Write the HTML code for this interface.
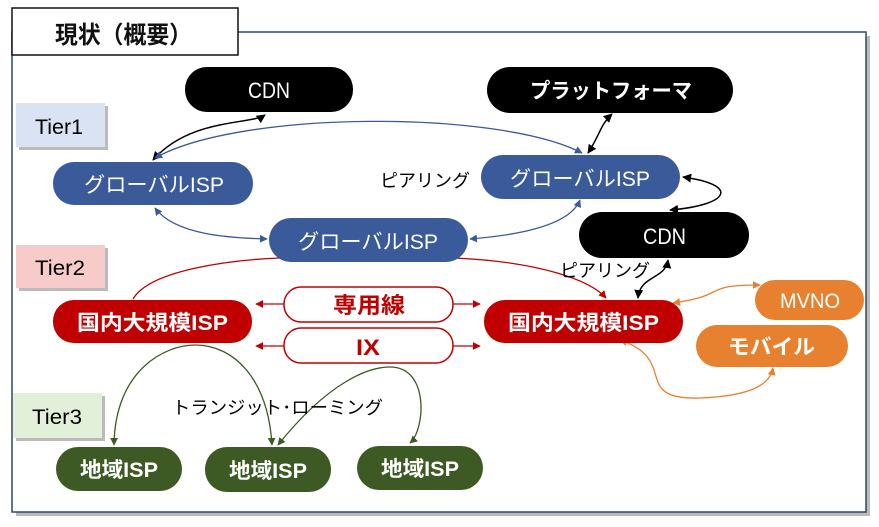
<!DOCTYPE html>
<html><head><meta charset="utf-8"><style>
body{margin:0;background:#fff;width:879px;height:522px;overflow:hidden}
svg text{font-family:"Liberation Sans","Noto Sans CJK JP",sans-serif}
</style></head><body>
<svg width="879" height="522" viewBox="0 0 879 522" xmlns="http://www.w3.org/2000/svg">
<defs>
<marker id="ab" viewBox="0 0 10 10" refX="9" refY="5" markerWidth="6" markerHeight="6" orient="auto-start-reverse"><path d="M0,0L10,5L0,10z" fill="#000"/></marker>
<marker id="au" viewBox="0 0 10 10" refX="9" refY="5" markerWidth="6" markerHeight="6" orient="auto-start-reverse"><path d="M0,0L10,5L0,10z" fill="#3a5a9a"/></marker>
<marker id="ar" viewBox="0 0 10 10" refX="9" refY="5" markerWidth="6" markerHeight="6" orient="auto-start-reverse"><path d="M0,0L10,5L0,10z" fill="#c00000"/></marker>
<marker id="ao" viewBox="0 0 10 10" refX="9" refY="5" markerWidth="6" markerHeight="6" orient="auto-start-reverse"><path d="M0,0L10,5L0,10z" fill="#e8812f"/></marker>
<marker id="ag" viewBox="0 0 10 10" refX="9" refY="5" markerWidth="6" markerHeight="6" orient="auto-start-reverse"><path d="M0,0L10,5L0,10z" fill="#3e5a24"/></marker>
</defs>
<rect x="16" y="36" width="854" height="480" fill="#bbb"/>
<rect x="12" y="32" width="854" height="480" fill="#fff" stroke="#2f4470" stroke-width="1.5"/>
<rect x="12" y="8" width="226" height="47" fill="#fff" stroke="#111" stroke-width="1.5"/>
<text x="55" y="43" font-size="24" font-weight="bold" fill="#111" textLength="137" lengthAdjust="spacingAndGlyphs">現状（概要）</text>

<rect x="19" y="106" width="89" height="44" fill="#bbb"/><rect x="16" y="103" width="89" height="44" fill="#dae3f3"/>
<text x="35" y="134" font-size="21" textLength="48" lengthAdjust="spacingAndGlyphs">Tier1</text>
<rect x="19" y="248" width="89" height="43" fill="#bbb"/><rect x="16" y="245" width="89" height="43" fill="#f8cbcb"/>
<text x="35" y="275" font-size="21" textLength="50" lengthAdjust="spacingAndGlyphs">Tier2</text>
<rect x="16" y="396" width="89" height="45" fill="#bbb"/><rect x="13" y="393" width="89" height="45" fill="#e2efd9"/>
<text x="32" y="424" font-size="21" textLength="50" lengthAdjust="spacingAndGlyphs">Tier3</text>

<path d="M265,115 C250,125 190,118 153,160" fill="none" stroke="#000" stroke-width="1.5" marker-start="url(#ab)" marker-end="url(#ab)"/>
<path d="M155,158 C240,110 500,110 582,153" fill="none" stroke="#3a5a9a" stroke-width="1.3" marker-start="url(#au)" marker-end="url(#au)"/>
<path d="M612,114 C600,125 600,135 588,153" fill="none" stroke="#000" stroke-width="1.5" marker-start="url(#ab)" marker-end="url(#ab)"/>
<path d="M155,208 C175,235 230,238 267,239" fill="none" stroke="#3a5a9a" stroke-width="1.3" marker-start="url(#au)" marker-end="url(#au)"/>
<path d="M580,200 C570,225 520,235 470,239" fill="none" stroke="#3a5a9a" stroke-width="1.3" marker-start="url(#au)" marker-end="url(#au)"/>
<path d="M683,177 C740,185 730,205 670,210" fill="none" stroke="#000" stroke-width="1.5" marker-start="url(#ab)" marker-end="url(#ab)"/>
<path d="M668,260 C665,280 640,275 638,298" fill="none" stroke="#000" stroke-width="1.5" marker-start="url(#ab)" marker-end="url(#ab)"/>
<path d="M133,299 C150,270 230,260 280,258" fill="none" stroke="#c00000" stroke-width="1.3"/>
<path d="M455,258 C540,262 590,280 606,298" fill="none" stroke="#c00000" stroke-width="1.3" marker-end="url(#ar)"/>
<path d="M284,304 L256,304" stroke="#c00000" stroke-width="1.3" marker-end="url(#ar)"/>
<path d="M453,304 L480,304" stroke="#c00000" stroke-width="1.3" marker-end="url(#ar)"/>
<path d="M284,346 L256,346" stroke="#c00000" stroke-width="1.3" marker-end="url(#ar)"/>
<path d="M453,346 L480,346" stroke="#c00000" stroke-width="1.3" marker-end="url(#ar)"/>
<path d="M673,303 C730,295 700,285 760,285" fill="none" stroke="#e8812f" stroke-width="1.3" marker-start="url(#ao)" marker-end="url(#ao)"/>
<path d="M620,340 C680,360 630,400 700,398 C750,396 770,385 773,368" fill="none" stroke="#e8812f" stroke-width="1.3" marker-start="url(#ao)" marker-end="url(#ao)"/>
<path d="M114,445 C115,370 165,345 195,345 C235,345 268,380 272,445" fill="none" stroke="#3e5a24" stroke-width="1.3" marker-start="url(#ag)" marker-end="url(#ag)"/>
<path d="M278,445 C330,380 370,367 390,367 C430,367 425,430 410,443" fill="none" stroke="#3e5a24" stroke-width="1.3" marker-start="url(#ag)" marker-end="url(#ag)"/>

<rect x="185" y="67" width="168" height="45" rx="22" fill="#000"/>
<text x="248" y="98" font-size="22" fill="#fff" textLength="42" lengthAdjust="spacingAndGlyphs">CDN</text>
<rect x="487" y="67" width="246" height="46" rx="23" fill="#000"/>
<text x="530" y="98" font-size="21" fill="#fff" font-weight="bold" textLength="162" lengthAdjust="spacingAndGlyphs">プラットフォーマ</text>
<rect x="53" y="162" width="200" height="43" rx="21" fill="#3a5a9a"/>
<text x="84" y="192" font-size="21" fill="#fff" textLength="140" lengthAdjust="spacingAndGlyphs">グローバルISP</text>
<rect x="481" y="155" width="199" height="44" rx="22" fill="#3a5a9a"/>
<text x="510" y="186" font-size="21" fill="#fff" textLength="140" lengthAdjust="spacingAndGlyphs">グローバルISP</text>
<rect x="269" y="218" width="199" height="44" rx="22" fill="#3a5a9a"/>
<text x="298" y="249" font-size="21" fill="#fff" textLength="140" lengthAdjust="spacingAndGlyphs">グローバルISP</text>
<rect x="579" y="212" width="170" height="46" rx="23" fill="#000"/>
<text x="643" y="244" font-size="22" fill="#fff" textLength="43" lengthAdjust="spacingAndGlyphs">CDN</text>
<text x="380" y="187" font-size="18" fill="#000" textLength="90" lengthAdjust="spacingAndGlyphs">ピアリング</text>
<text x="560" y="277" font-size="18" fill="#000" textLength="90" lengthAdjust="spacingAndGlyphs">ピアリング</text>
<rect x="53" y="300" width="199" height="43" rx="21" fill="#c00000"/>
<text x="77" y="330" font-size="21" fill="#fff" font-weight="bold" textLength="151" lengthAdjust="spacingAndGlyphs">国内大規模ISP</text>
<rect x="484" y="300" width="199" height="43" rx="21" fill="#c00000"/>
<text x="508" y="330" font-size="21" fill="#fff" font-weight="bold" textLength="151" lengthAdjust="spacingAndGlyphs">国内大規模ISP</text>
<rect x="284" y="287" width="169" height="35" rx="17" fill="#fff" stroke="#c00000" stroke-width="1.5"/>
<text x="333" y="313" font-size="22" fill="#c00000" font-weight="bold" textLength="72" lengthAdjust="spacingAndGlyphs">専用線</text>
<rect x="284" y="328" width="169" height="35" rx="17" fill="#fff" stroke="#c00000" stroke-width="1.5"/>
<text x="356" y="355" font-size="22" fill="#c00000" font-weight="bold" textLength="24" lengthAdjust="spacingAndGlyphs">IX</text>
<rect x="755" y="280" width="109" height="40" rx="20" fill="#e8812f"/>
<text x="780" y="308" font-size="21" fill="#fff" textLength="60" lengthAdjust="spacingAndGlyphs">MVNO</text>
<rect x="696" y="325" width="152" height="42" rx="21" fill="#e8812f"/>
<text x="728" y="354" font-size="21" fill="#fff" font-weight="bold" textLength="87" lengthAdjust="spacingAndGlyphs">モバイル</text>
<text x="172" y="414" font-size="18" fill="#000" textLength="211" lengthAdjust="spacingAndGlyphs">トランジット･ローミング</text>
<rect x="56" y="447" width="126" height="44" rx="22" fill="#3e5a24"/>
<text x="80" y="477" font-size="21" fill="#fff" font-weight="bold" textLength="78" lengthAdjust="spacingAndGlyphs">地域ISP</text>
<rect x="205" y="447" width="126" height="45" rx="22" fill="#3e5a24"/>
<text x="229" y="478" font-size="21" fill="#fff" font-weight="bold" textLength="78" lengthAdjust="spacingAndGlyphs">地域ISP</text>
<rect x="357" y="446" width="126" height="44" rx="22" fill="#3e5a24"/>
<text x="381" y="476" font-size="21" fill="#fff" font-weight="bold" textLength="78" lengthAdjust="spacingAndGlyphs">地域ISP</text>
</svg>
</body></html>
